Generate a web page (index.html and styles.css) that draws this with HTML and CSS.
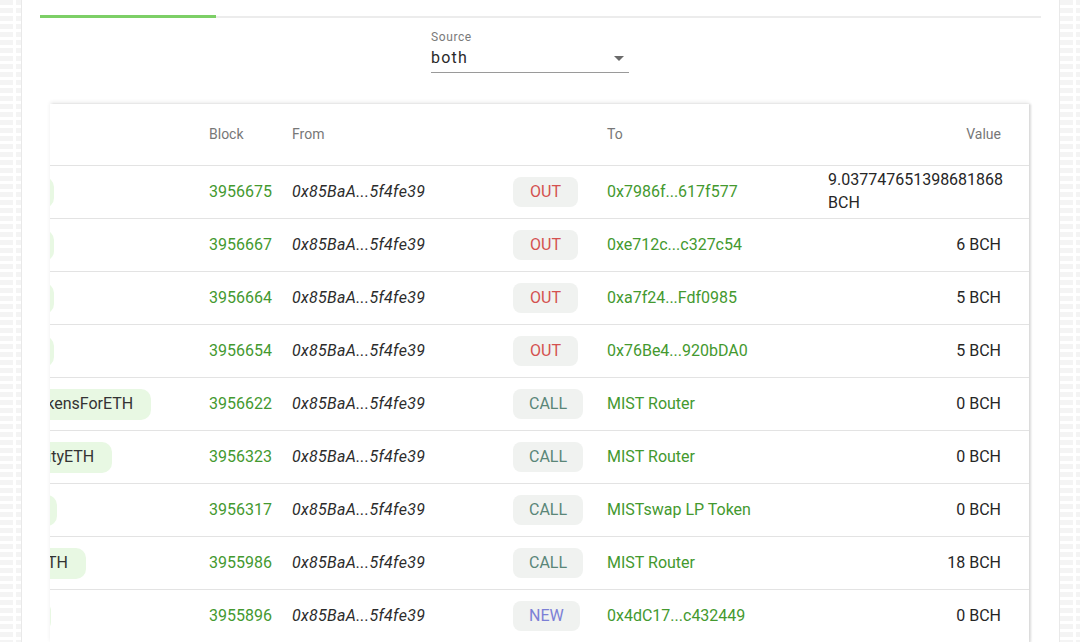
FILE: index.html
```html
<!DOCTYPE html>
<html lang="en">
<head>
<meta charset="utf-8">
<title>Transactions</title>
<link rel="stylesheet" href="styles.css">
</head>
<body>
<div class="page">
  <div class="card">
    <div class="tabs"><div class="tab-indicator"></div></div>
    <div class="filters">
      <div class="field">
        <div class="field-label">Source</div>
        <div class="select">
          <span class="select-value">both</span>
          <svg class="select-arrow" viewBox="0 0 24 24" width="24" height="24"><path d="M7 10l5 5 5-5z"/></svg>
        </div>
      </div>
    </div>
    <div class="paper">
      <table class="txs">
        <colgroup>
          <col class="c-method"><col class="c-block"><col class="c-from"><col class="c-type"><col class="c-to"><col class="c-value">
        </colgroup>
        <thead>
          <tr><th>Method</th><th>Block</th><th>From</th><th></th><th>To</th><th class="num">Value</th></tr>
        </thead>
        <tbody>
          <tr><td><span class="method">depositBCH</span></td><td class="link">3956675</td><td class="addr">0x85BaA...5f4fe39</td><td><span class="kind out">OUT</span></td><td class="link">0x7986f...617f577</td><td class="num"><span class="amount">9.037747651398681868 BCH</span></td></tr>
          <tr><td><span class="method">depositBCH</span></td><td class="link">3956667</td><td class="addr">0x85BaA...5f4fe39</td><td><span class="kind out">OUT</span></td><td class="link">0xe712c...c327c54</td><td class="num"><span class="amount">6 BCH</span></td></tr>
          <tr><td><span class="method">depositBCH</span></td><td class="link">3956664</td><td class="addr">0x85BaA...5f4fe39</td><td><span class="kind out">OUT</span></td><td class="link">0xa7f24...Fdf0985</td><td class="num"><span class="amount">5 BCH</span></td></tr>
          <tr><td><span class="method">depositBCH</span></td><td class="link">3956654</td><td class="addr">0x85BaA...5f4fe39</td><td><span class="kind out">OUT</span></td><td class="link">0x76Be4...920bDA0</td><td class="num"><span class="amount">5 BCH</span></td></tr>
          <tr><td><span class="method">swapExactTokensForETH</span></td><td class="link">3956622</td><td class="addr">0x85BaA...5f4fe39</td><td><span class="kind call">CALL</span></td><td class="link">MIST Router</td><td class="num"><span class="amount">0 BCH</span></td></tr>
          <tr><td><span class="method">removeLiquidityETH</span></td><td class="link">3956323</td><td class="addr">0x85BaA...5f4fe39</td><td><span class="kind call">CALL</span></td><td class="link">MIST Router</td><td class="num"><span class="amount">0 BCH</span></td></tr>
          <tr><td><span class="method">approveMax</span></td><td class="link">3956317</td><td class="addr">0x85BaA...5f4fe39</td><td><span class="kind call">CALL</span></td><td class="link">MISTswap LP Token</td><td class="num"><span class="amount">0 BCH</span></td></tr>
          <tr><td><span class="method">addLiquidityETH</span></td><td class="link">3955986</td><td class="addr">0x85BaA...5f4fe39</td><td><span class="kind call">CALL</span></td><td class="link">MIST Router</td><td class="num"><span class="amount">18 BCH</span></td></tr>
          <tr><td><span class="method">constructor</span></td><td class="link">3955896</td><td class="addr">0x85BaA...5f4fe39</td><td><span class="kind new">NEW</span></td><td class="link">0x4dC17...c432449</td><td class="num"><span class="amount">0 BCH</span></td></tr>
        </tbody>
      </table>
    </div>
  </div>
</div>
</body>
</html>
```
FILE: styles.css
```css
html, body {
  margin: 0;
  padding: 0;
  height: 642px;
  overflow: hidden;
}

body {
  font-family: Roboto, "Noto Sans", "Liberation Sans", sans-serif;
  color: #222;
  background-color: #fff;
  background-image:
    repeating-linear-gradient(to right, transparent 0 13px, #fff 13px 16px, transparent 16px 20px),
    repeating-linear-gradient(to bottom, #f4f4f4 0 5px, #fff 5px 8px);
}

.page {
  display: flex;
  justify-content: center;
  height: 100%;
}

.card {
  width: 1001px;
  padding: 0 18px;
  background: #fff;
  border-left: 1px solid #e9e9e9;
  border-right: 1px solid #e9e9e9;
  margin-left: 1px;
}

.tabs {
  height: 18px;
  display: flex;
  align-items: flex-end;
  box-shadow: inset 0 -2px 0 #ececec;
}

.tab-indicator {
  width: 176px;
  height: 3px;
  background: #7ccf66;
}

.filters {
  padding: 11px 0 0 391px;
}

.field {
  width: 198px;
}

.field-label {
  font-size: 12px;
  line-height: 16px;
  letter-spacing: 0.6px;
  color: #7a7a7a;
  margin-bottom: 1px;
}

.select {
  display: flex;
  align-items: center;
  justify-content: space-between;
  height: 24px;
  padding-bottom: 2px;
  border-bottom: 1px solid #9a9a9a;
}

.select-value {
  font-size: 16px;
  line-height: 24px;
  letter-spacing: 1.2px;
  color: #2a2a2a;
}

.select-arrow {
  fill: #6a6a6a;
  margin-right: -2px;
}

.paper {
  margin-top: 31px;
  margin-left: 10px;
  width: 979px;
  overflow: hidden;
  background: #fff;
  box-shadow: 0 -2px 4px rgba(0, 0, 0, 0.07), 2px 0 2px rgba(0, 0, 0, 0.12);
}

.txs {
  margin-left: -133px;
  width: 1112px;
  table-layout: fixed;
  border-collapse: separate;
  border-spacing: 0;
  font-size: 16px;
  line-height: 1.43;
}

.c-method { width: 276px; }
.c-block { width: 83px; }
.c-from { width: 221px; }
.c-type { width: 94px; }
.c-to { width: 221px; }
.c-value { width: 217px; }

.txs th {
  height: 62px;
  box-sizing: border-box;
  padding: 0 16px;
  text-align: left;
  font-weight: 400;
  font-size: 14px;
  color: #777;
  border-bottom: 1px solid #e3e3e3;
  vertical-align: middle;
}

.txs td {
  height: 53px;
  padding: 0 16px;
  border-bottom: 1px solid #e3e3e3;
  vertical-align: middle;
  white-space: nowrap;
  box-sizing: border-box;
}

.txs td.num, .txs th.num {
  text-align: right;
  padding-right: 28px;
  white-space: normal;
}

.amount {
  display: inline-block;
  text-align: left;
  color: #262626;
}

.link {
  color: #44992f;
}

.addr {
  font-style: italic;
  color: #2c2c2c;
  letter-spacing: 0.3px;
}

.method {
  display: inline-flex;
  align-items: center;
  height: 31px;
  padding: 0 18px;
  border-radius: 10px;
  background: #e8f8e3;
  color: #333;
}

.kind {
  display: inline-flex;
  align-items: center;
  justify-content: center;
  min-width: 65px;
  height: 30px;
  padding: 0 16px;
  box-sizing: border-box;
  border-radius: 8px;
  background: #f0f2f0;
}

.kind.out { color: #d4514f; }
.kind.call { color: #5a8678; }
.kind.new { color: #7c80d6; }
```
